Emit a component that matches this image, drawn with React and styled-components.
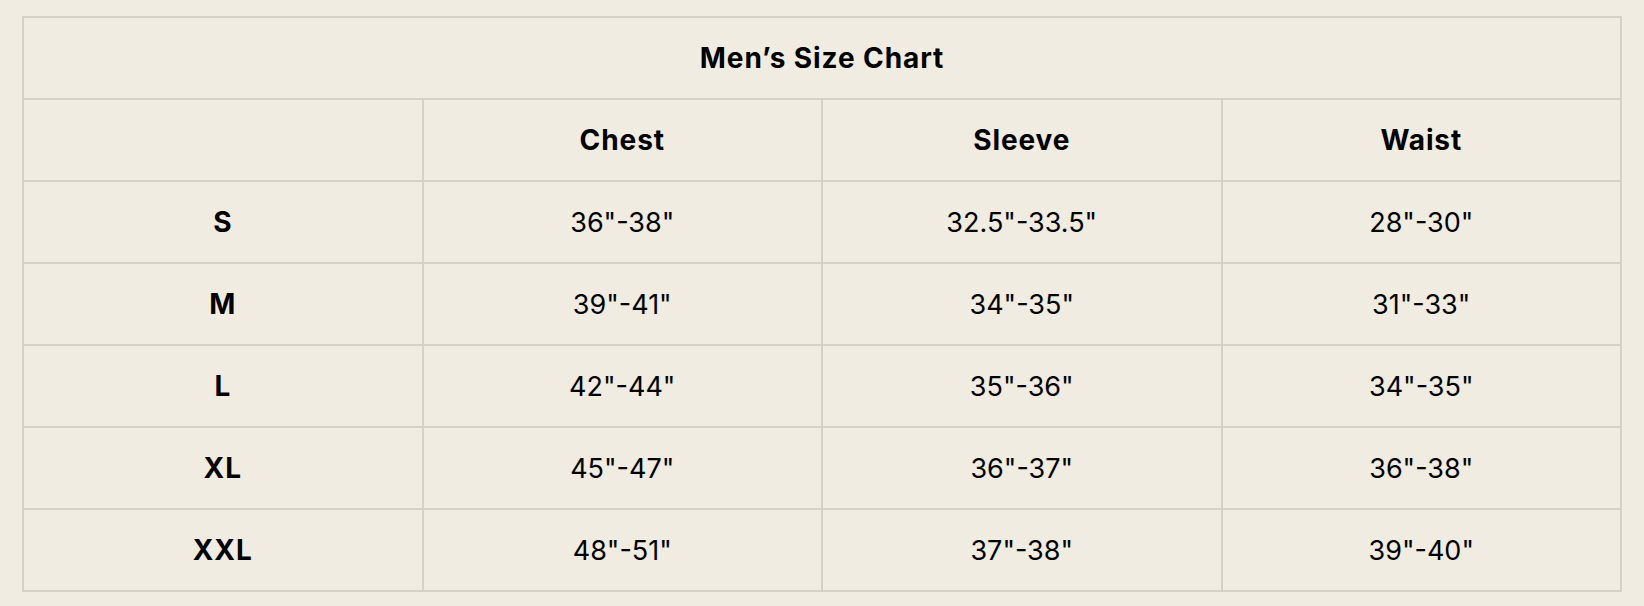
import React from 'react';
import styled, { createGlobalStyle } from 'styled-components';

const GlobalStyle = createGlobalStyle`
  html, body {
    margin: 0;
    background: #f0ece1;
  }
  body {
    padding: 16px 22px;
    font-family: Inter, Lato, "Open Sans", sans-serif;
    color: #000;
  }
`;

const sizes = [
  { size: 'S', chest: '36"-38"', sleeve: '32.5"-33.5"', waist: '28"-30"' },
  { size: 'M', chest: '39"-41"', sleeve: '34"-35"', waist: '31"-33"' },
  { size: 'L', chest: '42"-44"', sleeve: '35"-36"', waist: '34"-35"' },
  { size: 'XL', chest: '45"-47"', sleeve: '36"-37"', waist: '36"-38"' },
  { size: 'XXL', chest: '48"-51"', sleeve: '37"-38"', waist: '39"-40"' },
];

const Table = styled.table`
  width: 1600px;
  border-collapse: collapse;
  table-layout: fixed;
  border: 2px solid #d6d1c5;
`;

const Cell = styled.td`
  height: 80px;
  padding: 0;
  border: 2px solid #d6d1c5;
  text-align: center;
  vertical-align: middle;
  font-size: ${(p) => (p.$bold ? '28px' : '27px')};
  font-weight: ${(p) => (p.$bold ? 700 : 400)};
  letter-spacing: ${(p) => (p.$bold ? '0.9px' : '0')};
  line-height: 1;
`;

const Title = styled.th`
  height: 80px;
  padding: 0;
  border: 2px solid #d6d1c5;
  text-align: center;
  font-size: 28px;
  font-weight: 700;
  letter-spacing: 0.9px;
`;

const App = () => {
  return (
    <>
      <GlobalStyle />
      <Table>
        <thead>
          <tr>
            <Title colSpan={4}>Men’s Size Chart</Title>
          </tr>
          <tr>
            <Cell as="th" $bold />
            <Cell as="th" $bold>Chest</Cell>
            <Cell as="th" $bold>Sleeve</Cell>
            <Cell as="th" $bold>Waist</Cell>
          </tr>
        </thead>
        <tbody>
          {sizes.map((row) => (
            <tr key={row.size}>
              <Cell $bold>{row.size}</Cell>
              <Cell>{row.chest}</Cell>
              <Cell>{row.sleeve}</Cell>
              <Cell>{row.waist}</Cell>
            </tr>
          ))}
        </tbody>
      </Table>
    </>
  );
};

export default App;
